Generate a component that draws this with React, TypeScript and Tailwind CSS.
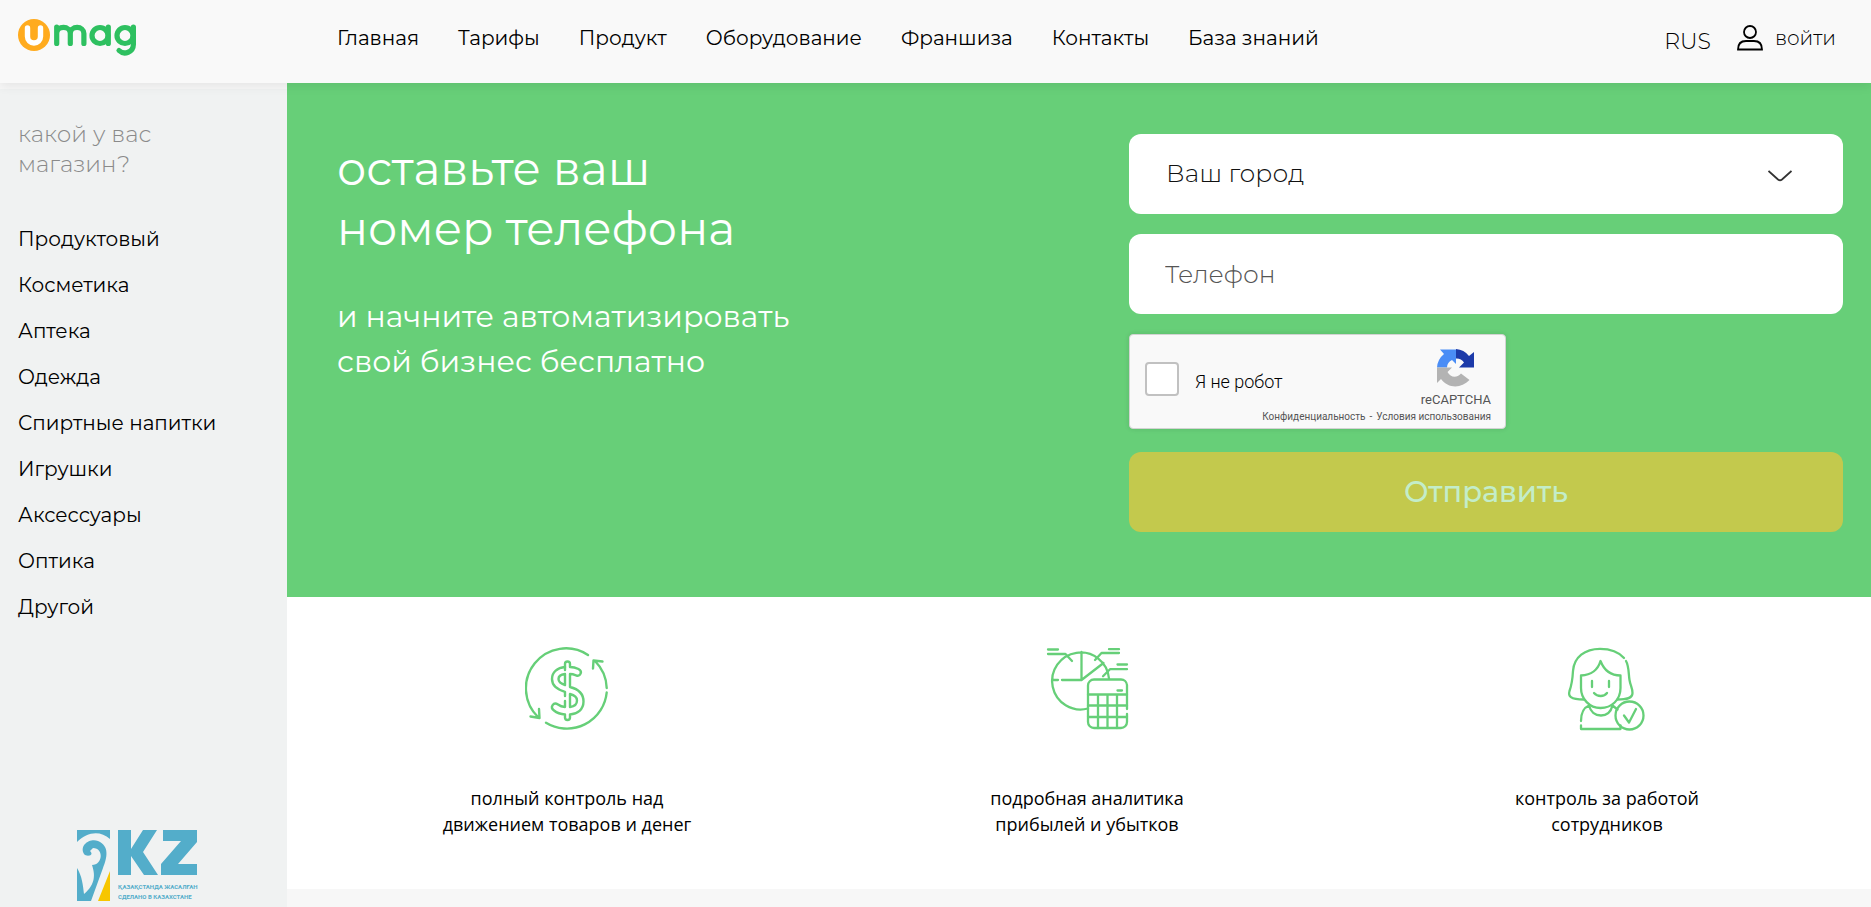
import { useState } from 'react';

const menu = ['Главная', 'Тарифы', 'Продукт', 'Оборудование', 'Франшиза', 'Контакты', 'База знаний'];

const shops = [
  'Продуктовый',
  'Косметика',
  'Аптека',
  'Одежда',
  'Спиртные напитки',
  'Игрушки',
  'Аксессуары',
  'Оптика',
  'Другой',
];

const features = [
  { icon: <MoneyIcon />, lines: ['полный контроль над', 'движением товаров и денег'] },
  { icon: <AnalyticsIcon />, lines: ['подробная аналитика', 'прибылей и убытков'] },
  { icon: <StaffIcon />, lines: ['контроль за работой', 'сотрудников'] },
];

function Logo() {
  return (
    <svg width="120" height="40" viewBox="0 0 120 40" fill="none" strokeLinecap="round" strokeLinejoin="round">
      <circle cx="16" cy="17" r="16" fill="#ffab1e" />
      <path d="M9.500 10v8.500a6.500 6.500 0 0 0 13 0V10" stroke="#fff" strokeWidth="5.400" />
      <g stroke="#2ec060" strokeWidth="5.200">
        <path d="M38.700 25.500V9M38.700 15.500a6.700 6 0 0 1 13.600 0v10M52.300 15.500a6.700 6 0 0 1 13.600 0v10" />
        <circle cx="82" cy="17.500" r="8" />
        <path d="M90.300 9v16.500" />
        <circle cx="107" cy="17.500" r="8" />
        <path d="M115.400 9v17.500a8.500 8.500 0 0 1-14.400 6" />
      </g>
    </svg>
  );
}

function MoneyIcon() {
  return (
    <svg width="84" height="84" viewBox="0 0 84 84" fill="none" stroke="#66cf78" strokeWidth="2.400" strokeLinecap="round" strokeLinejoin="round">
      <path d="M63 8A40 40 0 0 0 13 70M5.500 69.500l9 1.500-.5-9" />
      <path d="M21 75.700A40 40 0 0 0 81.700 45.500M81.700 41A40 40 0 0 0 70 14M77.500 14.500l-9-1-.5 8" />
      <path d="M40 23v-6a2.500 2.500 0 0 1 5 0v3c3.500 0 6 .8 8.500 2 4.500 2.300 2 8-2.500 6.300-2-.8-4-1.300-6-1.300v13c8 2 13.500 6 13.500 14.500 0 8-6 12.500-13.500 13v3a2.500 2.500 0 0 1-5 0v-3c-4.500-.3-8-1.500-11-4-4.500-3.500-.5-9 4-6 2 1.500 4 2.300 7 2.500V54" />
      <path d="M40 20c-7.500.7-13 5-13 12s5 10.500 13 12.800V49M40 27c-4 .5-6.500 2-6.500 5s2 4.500 6.500 6zM45 47v13c4-.5 7-2.500 7-6.500s-3-5.500-7-6.500z" />
    </svg>
  );
}

function AnalyticsIcon() {
  return (
    <svg width="84" height="84" viewBox="-2 -1 84 84" fill="none" stroke="#66cf78" strokeWidth="2.300" strokeLinecap="round" strokeLinejoin="round">
      <path d="M41 60.500a28.500 28.500 0 1 1 21-30M34.500 4v28L56.500 15M34.500 32H15M11 32H6.500" />
      <path d="M1 1.500h10M1 6h17.500l6.500 7M62 1.200h10M72 5H54.500L48 12M70.500 16.500H80M80 21.200H63l-7 7" />
      <path d="M80 61V37a6 6 0 0 0-6-5.500H47a6 6 0 0 0-6 6V74a6 6 0 0 0 6 6h27a6 6 0 0 0 6-6v-8" />
      <path d="M41 46.500h39M41 57.500h39M41 69h39M51 46.500V80M60.500 46.500V80M70 46.500V80M70.500 42.500h4.500" />
    </svg>
  );
}

function StaffIcon() {
  return (
    <svg width="84" height="84" viewBox="-2 -1 84 84" fill="none" stroke="#66cf78" strokeWidth="2.300" strokeLinecap="round" strokeLinejoin="round">
      <path d="M57 10C51 3 42 .8 33 .8 18 .8 7 9 6 23c-.5 9-1 13-3.500 20C1 48 3 51.500 17 51.500M59 13c3 5 2.500 13 3.500 19s3 8 3 13-5 6.500-15 6.500" />
      <path d="M14 27.500c10-.5 17-6 19.500-14.500C37 22 44 27.500 53.500 27.500V40c0 12-9 20-20 20s-19.500-9-19.500-20z" />
      <path d="M25 33v6M42 33v6M27 45c3.500 4 10 4 13 0" />
      <path d="M14 73c0-8 2-13 8-15.500 1.500 6 6 10 12 10s10-4 11.500-10l5 4M14 77.500V81h39.500v-3.500" />
      <circle cx="62.500" cy="67.500" r="14" />
      <path d="M57 67.500l5 7 7-13.500" />
    </svg>
  );
}

function CaptchaLogo() {
  return (
    <svg width="38" height="38" viewBox="0 0 38 38">
      <path d="M19 0a18 18 0 0 1 13 7l5-4v15.500H22l5-5a9 9 0 0 0-8-4z" fill="#1c3aa9" />
      <path d="M0 18.500A19 19 0 0 1 7 5L3 .5h16V15l-4-4c-3 1.500-5 4-5 7.500z" fill="#4a8df6" />
      <path d="M0 18.500h15l-4.500 4.500c3 5.500 9 6.500 13.500 1.500l8.500 6.500C24 40 11 39.500 4 30l-4 4z" fill="#b3b3b3" />
    </svg>
  );
}

function KzBadge() {
  return (
    <div className="flex gap-2 text-[#53adca]">
      <svg width="33" height="71" viewBox="0 0 33 71" fill="currentColor">
        <path d="M0 0h33v9C23 0 10 2 0 12z" />
        <path d="M0 38c5 8 6 17 7 26 12-10 11-20 8-29 11 0 12-17 1-17l-3 3c5 5-4 6-6 3C2 15 13 8 21 11c12 5 9 17 5 27L14 71H0z" />
        <path d="M33 41v30H21z" fill="#f7c600" />
      </svg>
      <svg width="80" height="71" viewBox="0 0 80 71" fill="currentColor">
        <path d="M0 0h13v19L25 0h14L25 22l15 23H26L13 26v19H0zM45 0h34v12L60 34h19v11H43V34L63 11H45z" />
        <g fontFamily="Roboto, sans-serif" fontSize="6" fontWeight="700">
          <text x="0" y="59">ҚАЗАҚСТАНДА ЖАСАЛҒАН</text>
          <text x="0" y="69">СДЕЛАНО В КАЗАХСТАНЕ</text>
        </g>
      </svg>
    </div>
  );
}

export default function App() {
  const [city, setCity] = useState('');
  const [phone, setPhone] = useState('');

  return (
    <div className="min-h-screen bg-[#f7f7f7] font-['Montserrat','Inter',sans-serif] text-black">
      <header className="relative z-10 flex h-[83px] items-center bg-[#f9f9f9] pb-[7px] pl-[18px] pr-[35px] shadow-[0_3px_10px_rgba(0,0,0,0.08)]">
        <a href="#" aria-label="umag" className="w-[319px] shrink-0">
          <Logo />
        </a>
        <nav className="flex flex-1 gap-[39px] text-xl">
          {menu.map((item) => (
            <a key={item} href="#" className="whitespace-nowrap">{item}</a>
          ))}
        </nav>
        <button className="mr-[26px] pt-1.5 text-[22px] font-light">RUS</button>
        <a href="#" className="flex items-center gap-3 text-xl font-light">
          <svg width="26" height="26" viewBox="0 0 26 26" fill="none" stroke="#000" strokeWidth="1.800">
            <circle cx="13" cy="7" r="6" />
            <path d="M1 24.500c0-6 3-8.500 8-8.500h8c5 0 8 2.500 8 8.500z" />
          </svg>
          войти
        </a>
      </header>

      <div className="flex">
        <aside className="mt-1.5 flex min-h-[818px] w-[287px] shrink-0 flex-col bg-[#f0f2f2] pl-[18px] pt-[30px]">
          <p className="text-[23px] font-light leading-[30px] text-[#8a8a8a]">
            какой у вас<br />магазин?
          </p>
          <ul className="mt-[37px] text-xl">
            {shops.map((shop) => (
              <li key={shop} className="leading-[46px]">
                <a href="#">{shop}</a>
              </li>
            ))}
          </ul>
          <div className="mb-1.5 ml-[59px] mt-auto">
            <KzBadge />
          </div>
        </aside>

        <main className="flex-1">
          <section className="flex min-h-[514px] justify-between bg-[#67cf78] pl-[50px] pr-7 pt-[51px]">
            <div className="text-white">
              <h1 className="mt-[5px] text-[46px] leading-[60px]">
                оставьте ваш<br />номер телефона
              </h1>
              <p className="mt-[35px] text-[30px] leading-[45px]">
                и начните автоматизировать<br />свой бизнес бесплатно
              </p>
            </div>

            <form className="flex w-[714px] flex-col gap-5" onSubmit={(e) => e.preventDefault()}>
              <div className="relative">
                <select
                  aria-label="Ваш город"
                  value={city}
                  onChange={(e) => setCity(e.target.value)}
                  className="h-20 w-full appearance-none rounded-xl bg-white px-[37px] text-[25px] font-light text-[#111]"
                >
                  <option value="">Ваш город</option>
                </select>
                <svg className="pointer-events-none absolute right-[51px] top-9" width="24" height="12" viewBox="0 0 24 12" fill="none" stroke="#333" strokeWidth="1.800">
                  <path d="M.5 1l9.500 8.500q2 1.500 4 0L23.500 1" />
                </svg>
              </div>
              <input
                type="tel"
                aria-label="Телефон"
                placeholder="Телефон"
                value={phone}
                onChange={(e) => setPhone(e.target.value)}
                className="h-20 w-full rounded-xl bg-white px-9 text-[25px] font-light placeholder:text-[#555]"
              />
              <div className="flex h-[95px] w-[377px] flex-col rounded border border-[#d3d3d3] bg-[#f9f9f9] pl-[15px] pr-3.5 font-['Roboto',sans-serif] shadow-[0_0_4px_1px_rgba(0,0,0,0.08)]">
                <div className="flex justify-between pt-3.5">
                  <label className="flex items-start gap-4 pt-[13px] text-lg font-light leading-10">
                    <input type="checkbox" className="h-[34px] w-[34px] appearance-none rounded-sm border-2 border-[#c1c1c1] bg-white" />
                    Я не робот
                  </label>
                  <div className="flex flex-col items-center text-[#555]">
                    <CaptchaLogo />
                    <span className="mt-1 text-[13px] leading-[18px]">reCAPTCHA</span>
                  </div>
                </div>
                <div className="flex justify-end gap-1 whitespace-nowrap text-[10px] leading-4 text-[#555]">
                  <a href="#">Конфиденциальность</a>
                  <span>-</span>
                  <a href="#">Условия использования</a>
                </div>
              </div>
              <button className="mt-[3px] h-20 rounded-xl bg-[#c3c94d] text-[29px] font-medium text-[#c3edc9]">
                Отправить
              </button>
            </form>
          </section>

          <section className="grid min-h-[292px] grid-cols-3 bg-white pl-5 pr-1 pt-[50px]">
            {features.map((feature) => (
              <div key={feature.lines[0]} className="flex flex-col items-center">
                {feature.icon}
                <p className="mt-[54px] text-center font-['Open_Sans',sans-serif] text-lg leading-[26px]">
                  {feature.lines[0]}<br />{feature.lines[1]}
                </p>
              </div>
            ))}
          </section>
        </main>
      </div>
    </div>
  );
}
